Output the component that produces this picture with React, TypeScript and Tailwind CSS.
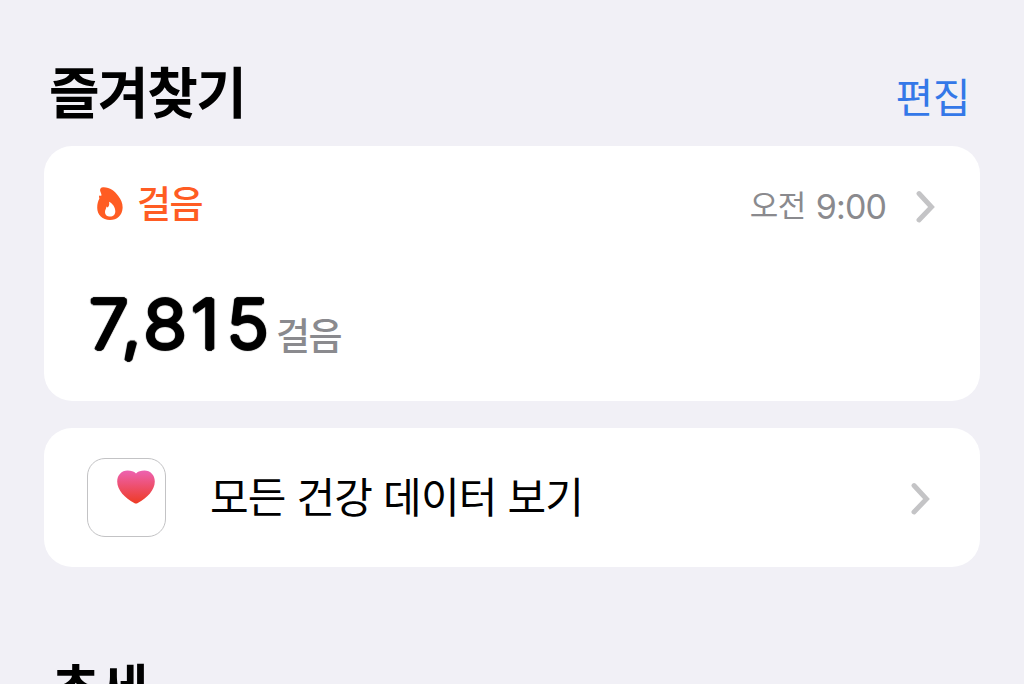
import React from 'react'

function Chevron({ className }: { className?: string }) {
  return (
    <svg className={className} width="20" height="34" viewBox="0 0 20 34" fill="none" aria-hidden="true">
      <path d="M3 4.500 L15.500 18 L3 31" stroke="#c4c4c6" strokeWidth="4.900" strokeLinecap="round" strokeLinejoin="miter" />
    </svg>
  )
}

function Flame() {
  return (
    <svg className="-mt-1" width="28" height="34" viewBox="0 0 28 34" aria-hidden="true">
      <path
        fill="#ff5c23"
        fillRule="evenodd"
        d="M6 .4C13-.4 18.500 3.800 22.300 9C25.300 13 26.800 16.500 26.600 21C26.300 28.300 21 33 14 33C6.600 33 1.200 28 1.200 20.800C1.200 17 2 14 3.400 11.500C3 10.400 2.900 9.400 3.200 8.400C4.200 8.900 5 8.900 5.400 8.400C5.700 7 4.600 5.400 4.200 4C3.800 2.300 4.500.7 6 .4ZM13 14.800C13.800 18 12.600 19.300 11.800 20.600L10.400 19.400C10.600 21.500 9 22.600 9 25C9 28 11.200 29.600 14.200 29.600C17.200 29.600 19.300 27.600 19.300 24.600C19.300 20.500 17 16.800 13 14.800Z"
      />
    </svg>
  )
}

function HeartTile() {
  return (
    <div className="flex h-[79px] w-[79px] shrink-0 justify-end rounded-[18px] border-[1.5px] border-[#c3c3c5] bg-white pt-[11px] pr-[10px]">
      <svg width="38" height="34" viewBox="0 0 38 34" aria-hidden="true">
        <defs>
          <linearGradient id="heart" x1="0" y1="0" x2="0" y2="1">
            <stop offset="0" stopColor="#ed62b1" />
            <stop offset="1" stopColor="#ee3b24" />
          </linearGradient>
        </defs>
        <path
          fill="url(#heart)"
          d="M19 3.600C21 1.400 24 .6 27.400.6 33.500.6 37.800 5.300 37.800 11.600c0 8.800-7.800 16.400-17 21.400-1.300.7-2.300.7-3.600 0C8 28 .2 20.400.2 11.600.2 5.300 4.500.6 10.600.6 14 .6 17 1.400 19 3.600Z"
        />
      </svg>
    </div>
  )
}

export default function App() {
  return (
    <div className="h-[684px] w-[1024px] overflow-hidden bg-[#f1f0f6] px-11 pt-[60px] font-['Inter','Noto_Sans_CJK_KR',sans-serif] text-black">
      <header className="flex h-[86px] justify-between pr-[10px] pl-[5px]">
        <h1 className="text-[55px] leading-[67px] font-bold tracking-[-1.500px]">즐겨찾기</h1>
        <button className="h-[76px] text-[41px] leading-[76px] tracking-[-0.500px] text-[#3478e8]">편집</button>
      </header>

      <section className="h-[255px] rounded-[28px] bg-white pt-9 pr-11 pl-11">
        <div className="flex h-12 items-center">
          <div className="ml-2 flex items-center gap-[13px] text-[#ff5c23]">
            <Flame />
            <span className="-mt-0.5 text-[37px] leading-[48px] font-medium tracking-[-1.500px]">걸음</span>
          </div>
          <div className="ml-auto flex items-center text-[#8a8a8e]">
            <span className="text-[31px] leading-[48px] tracking-[-0.500px]">오전</span>
            <span className="ml-[10px] pt-px text-[34px] leading-[48px] tracking-[-0.900px]">9:00</span>
            <Chevron className="ml-[30px]" />
          </div>
        </div>
        <div className="mt-[55px] flex h-[80px] items-baseline leading-[80px]">
          {/* soft offset shadows round off the corners of the digits */}
          <span className="w-[182px] origin-left -translate-y-px scale-x-[1.04] pl-px text-[68px] font-[350] whitespace-nowrap [text-shadow:2px_0_0.8px_#000,-2px_0_0.8px_#000,0_2px_0.8px_#000,0_-2px_0.8px_#000,1.400px_1.400px_0.8px_#000,-1.400px_1.400px_0.8px_#000,1.400px_-1.400px_0.8px_#000,-1.400px_-1.400px_0.8px_#000]">
            <span className="tracking-[1.800px]">7,</span>
            <span className="tracking-[4.200px]">8</span>
            <span className="tracking-[7.500px]">1</span>5
          </span>
          <span className="ml-[6px] text-[37px] font-medium tracking-[-1.500px] text-[#8a8a8e]">걸음</span>
        </div>
      </section>

      <section className="mt-[27px] flex h-[139px] items-center rounded-[28px] bg-white pr-[49px] pl-[43px]">
        <HeartTile />
        <span className="ml-11 text-[42px] leading-[60px] tracking-[-0.850px]">모든 건강 데이터 보기</span>
        <Chevron className="ml-auto" />
      </section>

      <h2 className="mt-[91px] pl-[7px] text-[54px] leading-[65px] font-bold tracking-[-2px]">추세</h2>
    </div>
  )
}
